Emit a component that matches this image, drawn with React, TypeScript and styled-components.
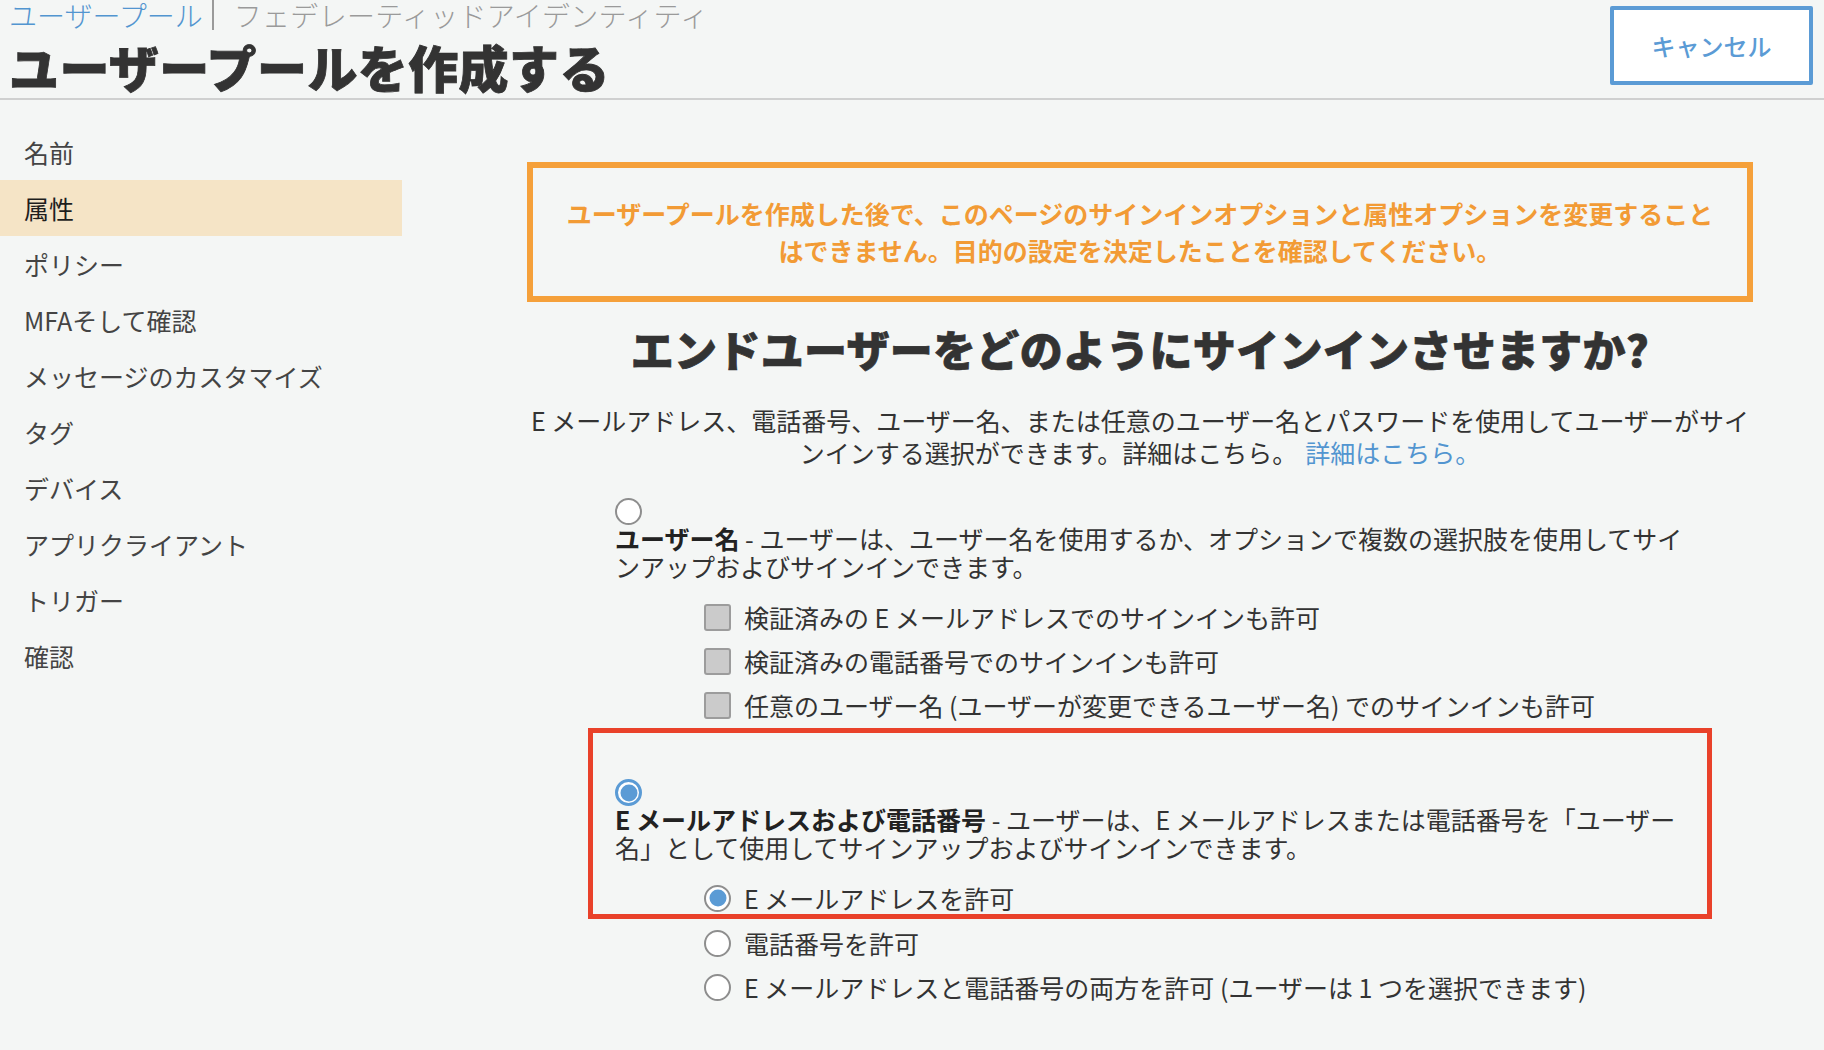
import React from "react"
import styled, { createGlobalStyle } from "styled-components"

const GlobalStyle = createGlobalStyle`
  * {
    box-sizing: border-box;
  }
  body {
    margin: 0;
    background: #f4f6f5;
    font-family: "Noto Sans CJK JP", "Noto Sans", sans-serif;
    color: #333;
  }
`

const Header = styled.header`
  display: flex;
  justify-content: space-between;
  align-items: flex-start;
  height: 100px;
  padding: 0 11px 0 9px;
  border-bottom: 2px solid #cfd0d0;
`

const TitleBlock = styled.div`
  display: flex;
  flex-direction: column;
`

const Breadcrumb = styled.div`
  display: flex;
  align-items: center;
  height: 30px;
  font-size: 28px;
  line-height: 30px;
  font-weight: 300;
`

const Crumb = styled.span<{ $active?: boolean }>`
  color: ${(p) => (p.$active ? "#5295d0" : "#9a9a9a")};
  letter-spacing: ${(p) => (p.$active ? "0" : "0.3px")};
`

const Divider = styled.span`
  width: 2px;
  height: 30px;
  background: #9a9a9a;
  margin: 0 20px 0 9px;
`

const Title = styled.h1`
  margin: 6px 0 0;
  font-size: 50px;
  line-height: 60px;
  font-weight: 900;
  letter-spacing: 0.4px;
  color: #333;
  -webkit-text-stroke: 0.8px #333;
`

const CancelButton = styled.button`
  margin-top: 6px;
  width: 203px;
  height: 79px;
  border: 4px solid #5b9bd5;
  border-radius: 2px;
  background: #fff;
  color: #5b9bd5;
  font-family: inherit;
  font-size: 24px;
  font-weight: 500;
`

const Body = styled.div`
  display: flex;
`

const Sidebar = styled.nav`
  width: 402px;
  flex-shrink: 0;
  padding-top: 24px;
`

const NavItem = styled.div<{ $active?: boolean }>`
  display: flex;
  align-items: center;
  height: 56px;
  padding-left: 24px;
  font-size: 25px;
  color: ${(p) => (p.$active ? "#1e1e1e" : "#444")};
  background: ${(p) => (p.$active ? "#f5e4c6" : "transparent")};
`

const Main = styled.main`
  width: 1351px;
  padding: 62px 0 40px 125px;
`

const Notice = styled.div`
  display: flex;
  align-items: center;
  justify-content: center;
  height: 140px;
  padding: 0 30px;
  border: 6px solid #f5a03a;
  text-align: center;
  font-size: 25px;
  line-height: 37px;
  font-weight: 700;
  color: #f29b35;
`

const Heading = styled.h2`
  margin: 18px 0 0;
  text-align: center;
  font-size: 43px;
  line-height: 56px;
  font-weight: 900;
  letter-spacing: 0.3px;
  color: #333;
  -webkit-text-stroke: 0.7px #333;
`

const Lead = styled.p`
  margin: 28px 0 0;
  text-align: center;
  font-size: 25px;
  line-height: 32px;
  color: #333;
`

const Link = styled.a`
  color: #5295d0;
  text-decoration: none;
  margin-left: 8px;
`

const Options = styled.div`
  margin: 30px 0 0 88px;
  width: 1090px;
`

const Radio = styled.span<{ $checked?: boolean; $accent?: boolean }>`
  position: relative;
  display: block;
  flex-shrink: 0;
  width: 27px;
  height: 27px;
  border-radius: 50%;
  background: #fff;
  border: ${(p) => (p.$accent ? "3px solid #5b9bd5" : "2px solid #8e8e8e")};
  &::after {
    content: "";
    display: ${(p) => (p.$checked ? "block" : "none")};
    position: absolute;
    left: 50%;
    top: 50%;
    width: 17px;
    height: 17px;
    border-radius: 50%;
    background: #5b9bd5;
    transform: translate(-50%, -50%);
  }
`

const OptionText = styled.p`
  margin: -1px 0 0;
  max-width: 1085px;
  font-size: 25px;
  line-height: 28px;
  color: #333;
  strong {
    font-weight: 700;
    color: #222;
  }
`

const SubList = styled.div<{ $gap?: number }>`
  margin-top: ${(p) => p.$gap ?? 15}px;
  margin-left: 89px;
`

const SubRow = styled.label`
  display: flex;
  align-items: center;
  gap: 13px;
  height: 44px;
  font-size: 25px;
  color: #333;
`

const Checkbox = styled.span`
  display: block;
  flex-shrink: 0;
  width: 27px;
  height: 27px;
  border: 2px solid #9c9c9c;
  border-radius: 3px;
  background: #cbcbcb;
`

const Highlight = styled.div`
  margin: 1px 0 0 -27px;
  width: 1124px;
  height: 191px;
  padding: 46px 17px 0 22px;
  border: 5px solid #e9412a;
`

const navItems = [
  "名前",
  "属性",
  "ポリシー",
  "MFAそして確認",
  "メッセージのカスタマイズ",
  "タグ",
  "デバイス",
  "アプリクライアント",
  "トリガー",
  "確認",
]

const App: React.FC = () => {
  return (
    <>
      <GlobalStyle />
      <Header>
        <TitleBlock>
          <Breadcrumb>
            <Crumb $active>ユーザープール</Crumb>
            <Divider />
            <Crumb>フェデレーティッドアイデンティティ</Crumb>
          </Breadcrumb>
          <Title>ユーザープールを作成する</Title>
        </TitleBlock>
        <CancelButton>キャンセル</CancelButton>
      </Header>
      <Body>
        <Sidebar>
          {navItems.map((item) => (
            <NavItem key={item} $active={item === "属性"}>
              {item}
            </NavItem>
          ))}
        </Sidebar>
        <Main>
          <Notice>
            ユーザープールを作成した後で、このページのサインインオプションと属性オプションを変更することはできません。目的の設定を決定したことを確認してください。
          </Notice>
          <Heading>エンドユーザーをどのようにサインインさせますか?</Heading>
          <Lead>
            E メールアドレス、電話番号、ユーザー名、または任意のユーザー名とパスワードを使用してユーザーがサインインする選択ができます。詳細はこちら。
            <Link href="#">詳細はこちら。</Link>
          </Lead>
          <Options>
            <Radio />
            <OptionText>
              <strong>ユーザー名</strong> - ユーザーは、ユーザー名を使用するか、オプションで複数の選択肢を使用してサインアップおよびサインインできます。
            </OptionText>
            <SubList>
              <SubRow>
                <Checkbox />
                検証済みの E メールアドレスでのサインインも許可
              </SubRow>
              <SubRow>
                <Checkbox />
                検証済みの電話番号でのサインインも許可
              </SubRow>
              <SubRow>
                <Checkbox />
                任意のユーザー名 (ユーザーが変更できるユーザー名) でのサインインも許可
              </SubRow>
            </SubList>
            <Highlight>
              <Radio $checked $accent />
              <OptionText>
                <strong>E メールアドレスおよび電話番号</strong> - ユーザーは、E メールアドレスまたは電話番号を「ユーザー名」として使用してサインアップおよびサインインできます。
              </OptionText>
              <SubList>
                <SubRow>
                  <Radio $checked />
                  E メールアドレスを許可
                </SubRow>
              </SubList>
            </Highlight>
            <SubList $gap={2}>
              <SubRow>
                <Radio />
                電話番号を許可
              </SubRow>
              <SubRow>
                <Radio />
                E メールアドレスと電話番号の両方を許可 (ユーザーは 1 つを選択できます)
              </SubRow>
            </SubList>
          </Options>
        </Main>
      </Body>
    </>
  )
}

export default App
